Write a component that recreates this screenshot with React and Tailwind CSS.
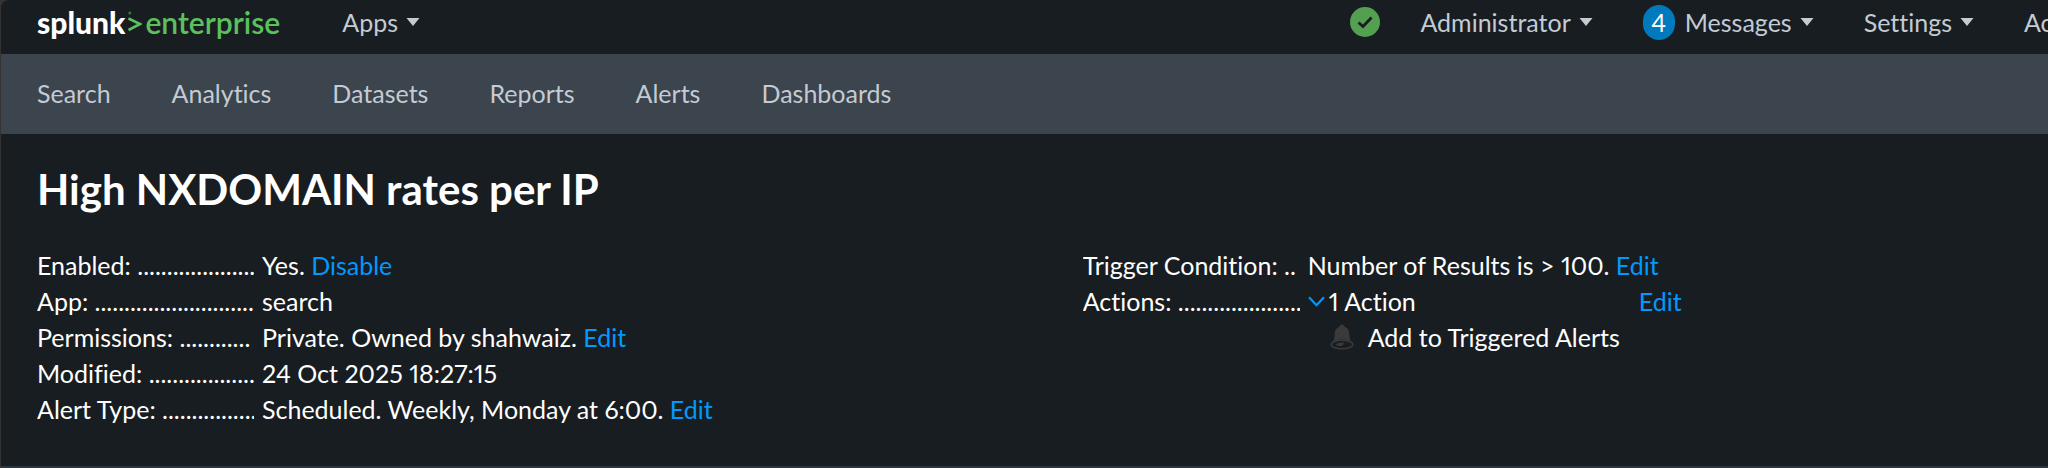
const Caret = () => (
  <svg className="ml-2 h-2 w-[14px] shrink-0" viewBox="0 0 14 8" aria-hidden="true">
    <path d="M0.5 0h13L7 8z" fill="currentColor" />
  </svg>
);

const MenuButton = ({ children }) => (
  <button type="button" className="flex shrink-0 items-center whitespace-nowrap">
    {children}
    <Caret />
  </button>
);

const Action = ({ children }) => (
  <a href="#" className="text-[#0099ff]">
    {children}
  </a>
);

const Row = ({ label, dots, children }) => (
  <>
    <dt className="overflow-hidden whitespace-nowrap">
      {label}: {".".repeat(dots)}
    </dt>
    <dd className="whitespace-nowrap">{children}</dd>
  </>
);

const Bell = () => (
  <svg className="h-[26px] w-6" viewBox="0 0 24 26" aria-hidden="true">
    <path
      d="M12 0.500c1.600 0 2.500 1 2.500 2.300 3 1 4.600 3.400 4.800 6.700.2 3.500.5 6 1.600 8.100C18.500 16.200 15 15.600 12 15.600s-6.500.6-8.900 2c1.100-2.100 1.400-4.600 1.600-8.100C4.900 6.200 6.500 3.800 9.500 2.800 9.500 1.500 10.400.5 12 .5z"
      fill="#3a3a3a"
    />
    <ellipse cx="12" cy="20.500" rx="10.800" ry="4.300" fill="none" stroke="#3a3a3a" strokeWidth="1.600" />
    <path d="M5.500 20.500c1.500-1.600 5-2.300 8.500-2l-1 2.600c-1.500 1.300-5 1.200-7.500-.6z" fill="#3a3a3a" />
  </svg>
);

const NAV = ["Search", "Analytics", "Datasets", "Reports", "Alerts", "Dashboards"];

export default function App() {
  return (
    <div className="overflow-hidden bg-[#333333] pl-px font-[Lato,sans-serif] text-[25px] leading-9 proportional-nums text-white [font-variant-ligatures:none]">
      <div className="rounded-tl-lg bg-[#181d21]">
        <header className="flex h-[54px] items-start pl-9 text-[#c3cbd4]">
          <a href="#" aria-label="splunk>enterprise" className="flex h-11 shrink-0 items-center text-[30px]">
            <span className="font-black text-white">splunk</span>
            <svg className="mx-[3px] h-6 w-[14px]" viewBox="0 0 14 24" aria-hidden="true">
              <path d="M0.500 8.500L12 14 0.500 20" fill="none" stroke="#5cc05c" strokeWidth="2.600" />
              <circle cx="1.800" cy="3" r="1.500" fill="#3a7a42" />
            </svg>
            <span className="font-semibold text-[#5cc05c]">enterprise</span>
          </a>
          <div className="ml-[62px] flex h-11 items-center">
            <MenuButton>Apps</MenuButton>
          </div>
          <div className="ml-auto flex h-11 shrink-0 items-center">
            <button type="button" aria-label="Health status" className="mr-10">
              <svg className="h-[30px] w-[30px]" viewBox="0 0 30 30" aria-hidden="true">
                <circle cx="15" cy="15" r="15" fill="#53a051" />
                <path d="M8.500 15.500l4.500 4L21.500 10.500" fill="none" stroke="#1a1e21" strokeWidth="2.800" />
              </svg>
            </button>
            <MenuButton>Administrator</MenuButton>
            <div className="mx-[50px] flex">
              <MenuButton>
                <span className="mr-[10px] flex h-[35px] w-8 items-center justify-center rounded-full bg-[#007abd] text-white">
                  4
                </span>
                Messages
              </MenuButton>
            </div>
            <MenuButton>Settings</MenuButton>
            <div className="ml-[50px] w-6">
              <MenuButton>Activity</MenuButton>
            </div>
          </div>
        </header>
        <nav className="flex h-20 items-center gap-[61px] bg-[#3c444d] pb-[2px] pl-9 text-[#c3cbd4]">
          {NAV.map((item) => (
            <a key={item} href="#">
              {item}
            </a>
          ))}
        </nav>
        <main className="border-b-2 border-[#2c3540] pt-[29px] pb-[39px] pl-9">
          <h1 className="text-[42px] leading-[52px] font-bold">High NXDOMAIN rates per IP</h1>
          <div className="mt-8 grid grid-cols-[52%_1fr] items-start">
            <dl className="grid grid-cols-[217px_1fr] gap-x-2">
              <Row label="Enabled" dots={20}>
                Yes. <Action>Disable</Action>
              </Row>
              <Row label="App" dots={27}>
                search
              </Row>
              <Row label="Permissions" dots={12}>
                Private. Owned by shahwaiz. <Action>Edit</Action>
              </Row>
              <Row label="Modified" dots={18}>
                24 Oct 2025 18:27:15
              </Row>
              <Row label="Alert Type" dots={16}>
                Scheduled. Weekly, Monday at 6:00. <Action>Edit</Action>
              </Row>
            </dl>
            <dl className="grid grid-cols-[217px_1fr] gap-x-2">
              <Row label="Trigger Condition" dots={2}>
                Number of Results is &gt; 100. <Action>Edit</Action>
              </Row>
              <Row label="Actions" dots={21}>
                <div className="flex w-[374px] items-center">
                  <button type="button" className="flex items-center">
                    <svg className="mr-1 h-[11px] w-[17px]" viewBox="0 0 17 11" aria-hidden="true">
                      <path d="M1 1.200l7.500 8 7.500-8" fill="none" stroke="#0099ff" strokeWidth="2.200" />
                    </svg>
                    1 Action
                  </button>
                  <span className="ml-auto">
                    <Action>Edit</Action>
                  </span>
                </div>
                <div className="ml-[22px] flex items-center gap-[14px]">
                  <Bell />
                  Add to Triggered Alerts
                </div>
              </Row>
            </dl>
          </div>
        </main>
      </div>
    </div>
  );
}
